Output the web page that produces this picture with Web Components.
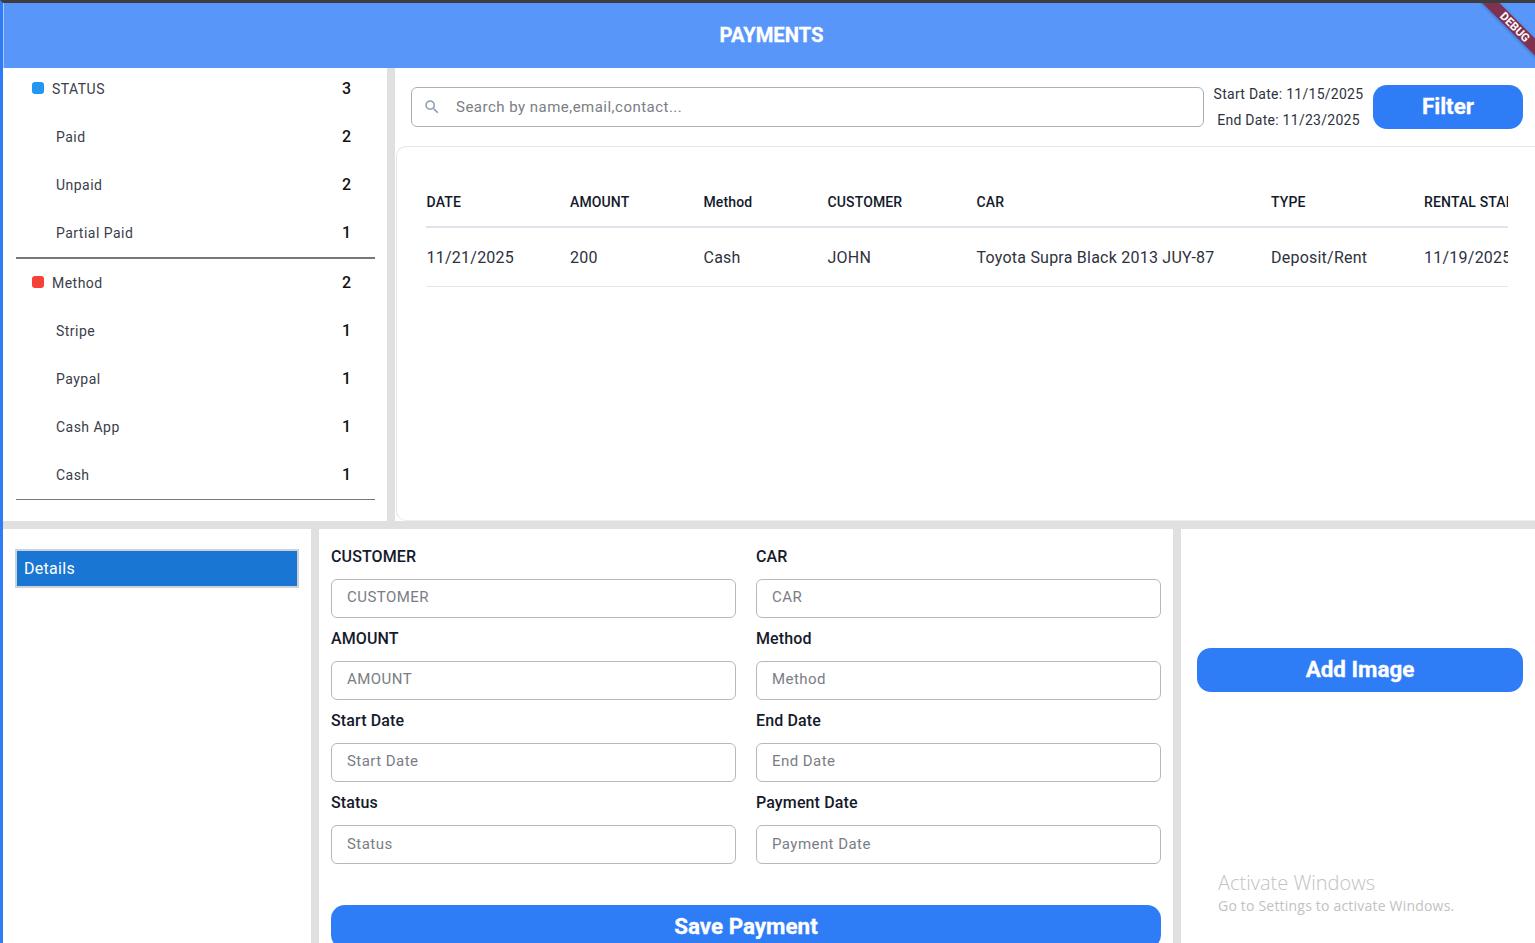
<!DOCTYPE html>
<html>
<head>
<meta charset="utf-8">
<title>Payments</title>
<style>
  html, body { margin: 0; height: 943px; overflow: hidden; background: #fff; }
  body { font-family: Roboto, "Noto Sans", sans-serif; }
</style>
</head>
<body>
<payments-app></payments-app>

<script>
const SEARCH_ICON = '<svg width="18" height="18" viewBox="0 0 24 24" fill="#8a9bb5"><path d="M15.5 14h-.79l-.28-.27A6.47 6.47 0 0 0 16 9.5 6.5 6.5 0 1 0 9.5 16c1.61 0 3.09-.59 4.23-1.57l.27.28v.79l5 4.99L20.49 19l-4.99-5zm-6 0C7.01 14 5 11.99 5 9.5S7.01 5 9.5 5 14 7.01 14 9.5 11.99 14 9.5 14z"></path></svg>';

customElements.define('blue-button', class blueButton extends HTMLElement {
  constructor() {
    super();
    this.attachShadow({ mode: 'open' });
    this.shadowRoot.innerHTML = `
      <style>
        :host {
          display: flex;
          align-items: center;
          justify-content: center;
          height: 44px;
          flex: none;
          box-sizing: border-box;
          padding-bottom: 2px;
          background: #2f7df6;
          border-radius: 14px;
          color: white;
          font-size: 22.4px;
          font-weight: 700;
          -webkit-text-stroke: 0.3px white;
        }
      </style>
      <slot></slot>
    `;
  }
});

customElements.define('filter-row', class filterRow extends HTMLElement {
  constructor() {
    super();
    this.attachShadow({ mode: 'open' });
    const dot = this.getAttribute('dot');
    this.shadowRoot.innerHTML = `
      <style>
        :host {
          display: flex;
          align-items: center;
          height: 48px;
          padding: 0 36px 0 53px;
          font-size: 14px;
          letter-spacing: 0.47px;
          color: #3a3d4a;
        }
        :host([dot]) {
          padding-left: 29px;
        }
        .dot {
          width: 12px;
          height: 12px;
          border-radius: 3px;
          margin-right: 8px;
          background: ${dot || 'none'};
        }
        .name {
          flex: 1;
          margin-top: 2px;
        }
        .count {
          font-size: 16px;
          letter-spacing: 0;
          font-weight: 500;
          color: #111;
        }
      </style>
      ${dot ? '<span class="dot"></span>' : ''}
      <span class="name"><slot></slot></span>
      <span class="count">${this.getAttribute('count')}</span>
    `;
  }
});

customElements.define('filter-panel', class filterPanel extends HTMLElement {
  constructor() {
    super();
    this.attachShadow({ mode: 'open' });
    this.shadowRoot.innerHTML = `
      <style>
        :host {
          display: block;
          background: white;
          overflow: hidden;
        }
        .first {
          height: 40px;
          margin-bottom: 4px;
        }
        hr {
          margin: 0 12px 0 12.5px;
          border: none;
          background: #77767c;
        }
        .thick {
          height: 2px;
          margin-top: 1px;
          margin-bottom: -1px;
        }
        .thin {
          height: 1px;
          margin-top: 1px;
        }
      </style>
      <filter-row class="first" dot="#2196f3" count="3">STATUS</filter-row>
      <filter-row count="2">Paid</filter-row>
      <filter-row count="2">Unpaid</filter-row>
      <filter-row count="1">Partial Paid</filter-row>
      <hr class="thick">
      <filter-row dot="#f44336" count="2">Method</filter-row>
      <filter-row count="1">Stripe</filter-row>
      <filter-row count="1">Paypal</filter-row>
      <filter-row count="1">Cash App</filter-row>
      <filter-row count="1">Cash</filter-row>
      <hr class="thin">
    `;
  }
});

customElements.define('search-bar', class searchBar extends HTMLElement {
  constructor() {
    super();
    this.attachShadow({ mode: 'open' });
    this.shadowRoot.innerHTML = `
      <style>
        :host {
          display: flex;
          align-items: center;
          gap: 15px;
          height: 40px;
          flex: 1;
          box-sizing: border-box;
          padding: 0 11px;
          border: 1px solid #b0b0b4;
          border-radius: 6px;
          font-size: 15px;
          letter-spacing: 0.48px;
          color: #7b7d85;
        }
        svg {
          display: block;
        }
      </style>
      ${SEARCH_ICON}
      <span>${this.getAttribute('placeholder')}</span>
    `;
  }
});

customElements.define('payments-table', class paymentsTable extends HTMLElement {
  constructor() {
    super();
    this.attachShadow({ mode: 'open' });
    const cols = ['DATE', 'AMOUNT', 'Method', 'CUSTOMER', 'CAR', 'TYPE', 'RENTAL START'];
    const row = ['11/21/2025', '200', 'Cash', 'JOHN', 'Toyota Supra Black 2013 JUY-87', 'Deposit/Rent', '11/19/2025'];
    this.shadowRoot.innerHTML = `
      <style>
        :host {
          display: block;
          box-sizing: border-box;
          flex: 1;
          margin-left: 1px;
          margin-right: -12px;
          padding: 31px 0 0 29px;
          background: white;
          border: 1px solid #e6e6ea;
          border-bottom-color: #eee;
          border-radius: 10px;
        }
        .table {
          width: 1082px;
          overflow: hidden;
        }
        .row {
          display: grid;
          grid-template-columns: 144px 133.5px 124px 149px 294.5px 152.5px 200px;
          align-items: center;
          white-space: nowrap;
        }
        .row span:first-child, .row span:last-child {
          padding-left: 0.6px;
        }
        .head {
          height: 48px;
          border-bottom: 2px solid #e2e2ea;
          font-size: 14px;
          font-weight: 500;
          letter-spacing: 0.13px;
          color: #151a2b;
        }
        .body {
          height: 58px;
          border-bottom: 1px solid #e6e6ea;
          font-size: 16px;
          letter-spacing: 0.23px;
          color: #2e3240;
        }
      </style>
      <div class="table">
        <div class="row head">${cols.map(c => `<span>${c}</span>`).join('')}</div>
        <div class="row body">${row.map(c => `<span>${c}</span>`).join('')}</div>
      </div>
    `;
  }
});

customElements.define('payments-top', class paymentsTop extends HTMLElement {
  constructor() {
    super();
    this.attachShadow({ mode: 'open' });
    this.shadowRoot.innerHTML = `
      <style>
        :host {
          display: flex;
          flex-direction: column;
          min-width: 0;
          overflow: hidden;
          background: white;
        }
        .bar {
          display: flex;
          align-items: center;
          height: 78px;
          flex: none;
          padding: 0 12px 0 16px;
        }
        .dates {
          width: 169px;
          text-align: center;
          font-size: 14px;
          line-height: 26px;
          letter-spacing: 0.27px;
          color: #2e3240;
        }
        .filter {
          width: 150px;
        }
      </style>
      <div class="bar">
        <search-bar placeholder="Search by name,email,contact..."></search-bar>
        <div class="dates">
          <div>Start Date: 11/15/2025</div>
          <div>End Date: 11/23/2025</div>
        </div>
        <blue-button class="filter">Filter</blue-button>
      </div>
      <payments-table></payments-table>
    `;
  }
});

customElements.define('details-nav', class detailsNav extends HTMLElement {
  constructor() {
    super();
    this.attachShadow({ mode: 'open' });
    this.shadowRoot.innerHTML = `
      <style>
        :host {
          display: block;
          background: white;
          padding: 20px 12px;
        }
        .item {
          box-sizing: border-box;
          height: 39px;
          padding-left: 7px;
          line-height: 35px;
          background: #1976d2;
          border: 2px solid #ccd2da;
          font-size: 16px;
          letter-spacing: 0.3px;
          color: white;
        }
      </style>
      <div class="item"><slot></slot></div>
    `;
  }
});

customElements.define('form-field', class formField extends HTMLElement {
  constructor() {
    super();
    this.attachShadow({ mode: 'open' });
    const label = this.getAttribute('label');
    this.shadowRoot.innerHTML = `
      <style>
        :host {
          display: block;
        }
        .label {
          height: 49px;
          padding-top: 17px;
          box-sizing: border-box;
          line-height: 20px;
          font-size: 16px;
          font-weight: 500;
          letter-spacing: 0.12px;
          color: #151a2b;
        }
        .input {
          box-sizing: border-box;
          height: 39px;
          padding-left: 15px;
          line-height: 34px;
          border: 1px solid #b8b8bc;
          border-radius: 6px;
          font-size: 15px;
          letter-spacing: 0.45px;
          color: #7b7d85;
        }
        :host([last]) .input {
          line-height: 36px;
        }
      </style>
      <div class="label">${label}</div>
      <div class="input">${label}</div>
    `;
  }
});

customElements.define('payment-form', class paymentForm extends HTMLElement {
  constructor() {
    super();
    this.attachShadow({ mode: 'open' });
    const names = ['CUSTOMER', 'CAR', 'AMOUNT', 'Method', 'Start Date', 'End Date', 'Status', 'Payment Date'];
    this.shadowRoot.innerHTML = `
      <style>
        :host {
          display: block;
          background: white;
          padding: 0 12px;
          overflow: hidden;
        }
        .grid {
          display: grid;
          grid-template-columns: 405px 405px;
          column-gap: 20px;
          margin-top: 1px;
          margin-bottom: 47px;
        }
        form-field {
          margin-bottom: -6px;
        }
        blue-button {
          width: 830px;
        }
      </style>
      <div class="grid">${names.map((n, i) => `<form-field label="${n}"${i > 5 ? ' last' : ''}></form-field>`).join('')}</div>
      <blue-button>Save Payment</blue-button>
    `;
  }
});

customElements.define('image-panel', class imagePanel extends HTMLElement {
  constructor() {
    super();
    this.attachShadow({ mode: 'open' });
    this.shadowRoot.innerHTML = `
      <style>
        :host {
          display: block;
          position: relative;
          background: white;
          padding: 119px 12px 0 16px;
        }
        .watermark {
          position: absolute;
          left: 37px;
          top: 341px;
          font-family: "Open Sans", sans-serif;
          color: #c2c2c2;
        }
        .watermark div:first-child {
          font-size: 20px;
          line-height: 26px;
          font-weight: 300;
        }
        .watermark div:last-child {
          font-size: 14px;
          line-height: 20px;
          letter-spacing: 0.2px;
        }
      </style>
      <blue-button>Add Image</blue-button>
      <div class="watermark">
        <div>Activate Windows</div>
        <div>Go to Settings to activate Windows.</div>
      </div>
    `;
  }
});

customElements.define('debug-banner', class debugBanner extends HTMLElement {
  constructor() {
    super();
    this.attachShadow({ mode: 'open' });
    this.shadowRoot.innerHTML = `
      <style>
        :host {
          position: absolute;
          top: 0;
          right: 0;
          width: 60px;
          height: 60px;
          overflow: hidden;
          pointer-events: none;
        }
        .ribbon {
          position: absolute;
          top: 18px;
          left: -10px;
          width: 100px;
          height: 12px;
          line-height: 12px;
          transform: rotate(45deg);
          background: #7f3150;
          box-shadow: 0 1px 3px rgba(0,0,0,0.25);
          text-align: center;
          font-size: 11.5px;
          font-weight: 700;
          color: white;
        }
      </style>
      <div class="ribbon">DEBUG</div>
    `;
  }
});

customElements.define('payments-app', class paymentsApp extends HTMLElement {
  constructor() {
    super();
    this.attachShadow({ mode: 'open' });
    this.shadowRoot.innerHTML = `
      <style>
        :host {
          display: block;
          position: relative;
          height: 943px;
          overflow: hidden;
          box-sizing: border-box;
          border-top: 3px solid #3d3d40;
          border-left: 3px solid #2f7df6;
          background: #e0e0e0;
        }
        header {
          display: flex;
          align-items: center;
          justify-content: center;
          box-sizing: border-box;
          height: 65px;
          padding-left: 4px;
          padding-bottom: 2px;
          border-left: 1px solid #a8c8fb;
          background: #5896f9;
          color: white;
          font-size: 20.2px;
          font-weight: 700;
          -webkit-text-stroke: 0.3px white;
        }
        .top {
          display: grid;
          grid-template-columns: 384px 1140px;
          column-gap: 8px;
          height: 453px;
        }
        .bottom {
          display: grid;
          grid-template-columns: 308px 854px 354px;
          column-gap: 8px;
          margin-top: 8px;
          height: 414px;
        }
      </style>
      <header>PAYMENTS</header>
      <div class="top">
        <filter-panel></filter-panel>
        <payments-top></payments-top>
      </div>
      <div class="bottom">
        <details-nav>Details</details-nav>
        <payment-form></payment-form>
        <image-panel></image-panel>
      </div>
      <debug-banner></debug-banner>
    `;
  }
});
</script>
</body>
</html>
